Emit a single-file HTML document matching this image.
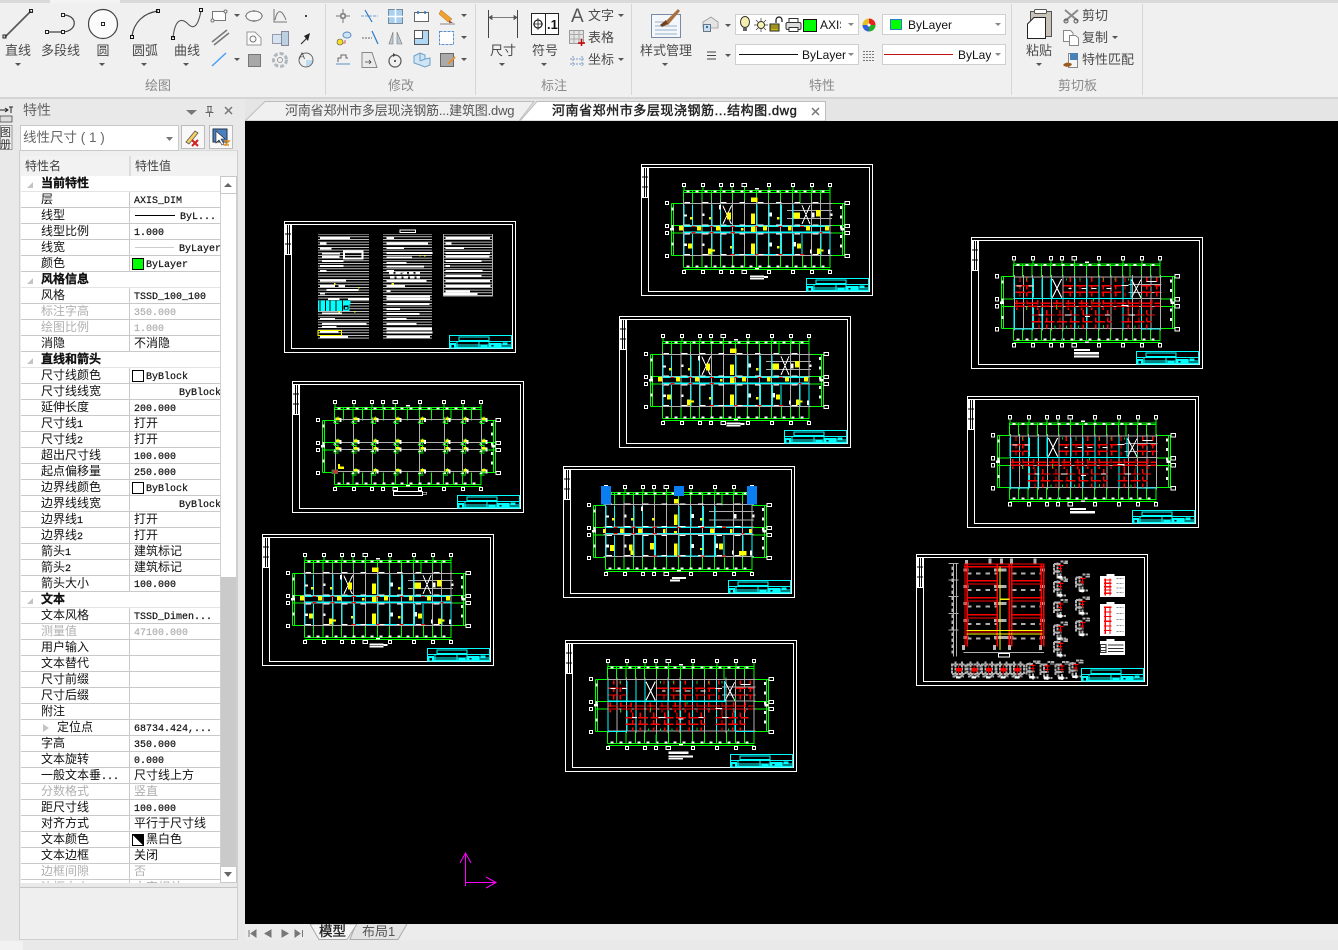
<!DOCTYPE html>
<html lang="zh"><head><meta charset="utf-8"><title>CAD</title>
<style>
html,body{margin:0;padding:0}
body{width:1338px;height:950px;overflow:hidden;background:#e9e9e9;position:relative;font-family:"Liberation Sans","Noto Sans CJK SC",sans-serif}
svg{position:absolute;display:block}
.a{position:absolute}
.r13{font:13px "Liberation Sans","Noto Sans CJK SC",sans-serif;fill:#4a4a4a}
.p13{font:13px "Liberation Sans","Noto Sans CJK SC",sans-serif;fill:#8a8a8a}
.en{font:12px "Liberation Sans",sans-serif;fill:#111}
#tbl{position:absolute;left:21px;top:176px;width:199px;height:707px;overflow:hidden;background:#fff;font:12px/15px "WenQuanYi Zen Hei","Noto Sans CJK SC",sans-serif;color:#111}
.w{height:16px;box-sizing:border-box;border-bottom:1px solid #c9c9c9;position:relative;white-space:nowrap}
.w>b,.w>u{position:absolute;top:-1px;text-decoration:none;font-weight:normal}
.w>b{left:20px}
.w>u{left:110px;width:89px;box-sizing:border-box;padding-left:3px;overflow:hidden;height:16px}
.w::after{content:"";position:absolute;left:108px;top:0;bottom:-1px;width:1px;background:#c9c9c9}
.g{border-bottom:1px solid #e4e4e4}
.g::after{display:none}
.g>b{font-weight:bold;-webkit-text-stroke:.3px #111}
.g::before{content:"";position:absolute;left:6px;top:6px;width:0;height:0;border-left:6px solid transparent;border-bottom:6px solid #c4c4c4}
.d>b,.d>u{color:#b0b0b0}
i{font:10px/15px "Liberation Mono",monospace;font-style:normal;-webkit-text-stroke:.2px currentColor}
.sw{position:absolute;left:1px;top:3px;width:10px;height:10px;border:1px solid #000;background:#fff}
.ln{display:inline-block;vertical-align:middle;height:1px;background:#000;margin:0 5px 0 1px}
</style></head><body>

<!-- ribbon -->
<div class="a" style="left:0;top:0;width:1338px;height:98px;background:#f0f0f0"></div>
<div class="a" style="left:0;top:0;width:1338px;height:3px;background:#d9d9d9"></div>
<div class="a" style="left:50px;top:0;width:70px;height:3px;background:#f3f3f3"></div>
<div class="a" style="left:0;top:97px;width:1338px;height:2px;background:#d4d4d4"></div>
<div class="a" style="left:0;top:99px;width:1338px;height:22px;background:#e5e5e5"></div>

<svg style="left:0;top:0" width="1338" height="98" viewBox="0 0 1338 98" fill="none">
<defs><clipPath id="c1"><rect x="819" y="14" width="22" height="20"/></clipPath><clipPath id="c2"><rect x="957" y="44" width="34" height="20"/></clipPath></defs>
<path d="M325.500 4V95M475.500 4V95M631.500 4V95M1011.500 4V95M1142.500 4V95" stroke="#d6d6d6"/>
<!-- big draw tools -->
<path d="M5 37L31 11" stroke="#555" stroke-width="1.600"/><rect x="3" y="35" width="3" height="3" stroke="#222"/><rect x="29.500" y="9.500" width="3" height="3" stroke="#222"/>
<path d="M47 32H63C78 31 78 15 63 15" stroke="#444" stroke-width="1.200"/><rect x="45.500" y="30.500" width="3" height="3" stroke="#222" fill="#fff"/><rect x="61.500" y="30.500" width="3" height="3" stroke="#222" fill="#fff"/><rect x="61.500" y="13.500" width="3" height="3" stroke="#222" fill="#fff"/>
<circle cx="103" cy="24" r="14.500" stroke="#444" stroke-width="1.200" fill="#fbfbfb"/><rect x="101.500" y="22.500" width="3" height="3" stroke="#222"/>
<path d="M132 36C134 22 144 13 158 11" stroke="#444" stroke-width="1.200"/><rect x="130.500" y="35.500" width="3" height="3" stroke="#111"/><rect x="156.500" y="9.500" width="3" height="3" stroke="#111"/>
<path d="M173 38C175 18 182 18 188 24C194 30 198 26 201 11" stroke="#555" stroke-width="1.100"/><rect x="171.500" y="36.500" width="3" height="3" stroke="#111"/><rect x="199.500" y="8.500" width="3" height="3" stroke="#111"/>
<g class="r13"><text class="r13" x="5" y="55">直线</text><text class="r13" x="41" y="55">多段线</text><text class="r13" x="96.500" y="55">圆</text><text class="r13" x="132" y="55">圆弧</text><text class="r13" x="174" y="55">曲线</text></g>
<!-- small dropdown arrows -->
<path d="M15 63h6l-3 3zM99 63h6l-3 3zM141 63h6l-3 3zM183 63h6l-3 3zM234 14h6l-3 3zM234 58h6l-3 3zM461 14h6l-3 3zM461 36h6l-3 3zM461 58h6l-3 3zM499 63h6l-3 3zM541 63h6l-3 3zM618 14h6l-3 3zM618 58h6l-3 3zM662 63h6l-3 3zM725 24h6l-3 3zM725 54h6l-3 3zM1036 63h6l-3 3zM1112 36h6l-3 3z" fill="#555"/>
<!-- small draw icons -->
<rect x="212.500" y="11.500" width="13" height="9" stroke="#777" fill="#fff"/><circle cx="212.500" cy="20.500" r="1.500" fill="#fff" stroke="#777"/><circle cx="225.500" cy="11.500" r="1.500" fill="#fff" stroke="#777"/>
<ellipse cx="254" cy="16" rx="8" ry="5" stroke="#777" fill="#f8f8f8"/><path d="M254 10v2M254 20v2M246 16h-1M262 16h1" stroke="#777"/>
<path d="M274 9V22H287M275 20C278 6 283 12 286 20" stroke="#777"/>
<rect x="305" y="15" width="2" height="2" fill="#444"/>
<path d="M212 42L227 30M214 45L229 33" stroke="#777" stroke-width="1.500"/>
<path d="M247 32H255L261 38V45H247Z" stroke="#999" fill="#fbfbfb"/><circle cx="253" cy="39" r="3" stroke="#777"/>
<rect x="272.500" y="34.500" width="13" height="9" fill="#d4e4f2" stroke="#99a"/><rect x="281.500" y="31.500" width="7" height="14" fill="#bcd0e2" stroke="#889"/>
<path d="M301 44L307 38" stroke="#333" stroke-width="1.200"/><path d="M304 36L310 33L308 41Z" fill="#222"/>
<path d="M212 66L226 53" stroke="#4aa0f0" stroke-width="1.500"/>
<rect x="248.500" y="54.500" width="12" height="12" fill="#a8a8a8" stroke="#777"/>
<circle cx="280" cy="60" r="6.500" stroke="#aeb8c0" stroke-width="3" stroke-dasharray="4 2"/><circle cx="280" cy="60" r="2.500" stroke="#999"/>
<path d="M306 60H313A7 7 0 0 1 306 67Z" fill="#bcdcf0"/><circle cx="306" cy="60" r="7" stroke="#666"/><text x="299" y="59" style="font:9px 'Liberation Sans',sans-serif;fill:#555">A</text>
<!-- modify -->
<path d="M336 16H350M343 9V23" stroke="#777"/><rect x="341" y="14" width="4" height="4" stroke="#555" fill="#f0f0f0"/>
<path d="M361 16H378" stroke="#7aa3c8" stroke-dasharray="3 1"/><path d="M365 10L372 22" stroke="#2a7ac8" stroke-width="1.200"/>
<rect x="388.500" y="9.500" width="14" height="14" fill="#a8d0f0" stroke="#789"/><path d="M395.500 9V23M388 16.500H403" stroke="#fff" stroke-width="1.500"/>
<rect x="414.500" y="12.500" width="14" height="9" fill="#fff" stroke="#666"/><path d="M418 11v3M425 11v3" stroke="#2a7ac8" stroke-width="1.500"/>
<path d="M441 10L452 19L448 22L439 14Z" fill="#f0a030" stroke="#a87020" stroke-width=".5"/><path d="M440 24H455" stroke="#888"/><path d="M449 20l4 3h-4z" fill="#a05030"/>
<circle cx="340" cy="42" r="3" fill="#f4e020" stroke="#555" stroke-width=".6"/><ellipse cx="347" cy="35" rx="4" ry="3" fill="#cfe2f4" stroke="#5a8ec0"/><path d="M345 40v3h-2" stroke="#c33" stroke-width=".8"/>
<path d="M362 38H372" stroke="#666" stroke-dasharray="2 1"/><path d="M372 31L378 44" stroke="#2a7ac8" stroke-width="1.200"/>
<path d="M393 32L389 44H393ZM397 32L402 44H397Z" fill="#bcc8d4" stroke="#777" stroke-width=".6"/>
<rect x="414.500" y="30.500" width="14" height="14" fill="#b0d8f4" stroke="#555"/><rect x="414.500" y="30.500" width="8" height="8" fill="#fff" stroke="#555"/>
<rect x="439.500" y="31.500" width="14" height="13" fill="#fff" stroke="#5a90c8" stroke-dasharray="3 1"/>
<path d="M336 64H350" stroke="#5a90c8"/><path d="M338 62V58H341V55H346V58H348" stroke="#666"/>
<path d="M362 52.500H372L377 67.500H362Z" fill="#eaeaea" stroke="#888"/><path d="M365 62H371M369 60l2 2l-2 2" stroke="#444" stroke-width=".8"/>
<circle cx="395" cy="61" r="6" stroke="#555" stroke-width="1.200"/><circle cx="395" cy="61" r="1" fill="#333"/><path d="M393 53l3 2l-3 2z" fill="#444"/>
<path d="M414 56l6-3l5 2v4l5-1v7l-5 2l-5-2l-6-2zM420 53v8M420 61l5-2" stroke="#6ea0c8" fill="#cfe4f4"/>
<rect x="440.500" y="53.500" width="13" height="13" fill="#aaa" stroke="#666"/><path d="M448 64l7-7" stroke="#e09030" stroke-width="2"/>
<!-- dim -->
<path d="M488.500 10V38M517.500 10V38" stroke="#444"/><path d="M489 17.500H517M489 17.500l3-2v4zM517 17.500l-3-2v4z" stroke="#555" stroke-width=".8" fill="#555"/>
<rect x="531.500" y="13.500" width="27" height="21" fill="#fff" stroke="#222"/><path d="M545.500 13V35" stroke="#222"/><circle cx="538" cy="24" r="4" stroke="#222" stroke-width="1.200"/><path d="M533 24H543M538 18V30" stroke="#222" stroke-width=".8"/><text x="547" y="29" style="font:bold 13px 'Liberation Sans',sans-serif;fill:#111">.1</text>
<text x="571" y="22" style="font:19px 'Liberation Sans',sans-serif;fill:#555">A</text>
<rect x="569.500" y="30.500" width="14" height="13" fill="#e4e4e4" stroke="#999"/><path d="M569 34.500H584M574 31V44M579 31V44M569 39H584" stroke="#aaa"/><path d="M578 43H585M581.500 39V46" stroke="#c00" stroke-width="1.500"/>
<path d="M573 56V66M582 56V66M570 59H585M570 64H585" stroke="#7a9cc0" stroke-dasharray="2 1"/>
<text class="r13" x="490" y="55">尺寸</text><text class="r13" x="532" y="55">符号</text>
<text class="r13" x="588" y="20">文字</text><text class="r13" x="588" y="42">表格</text><text class="r13" x="588" y="64">坐标</text>
<!-- style -->
<rect x="651.500" y="14.500" width="29" height="23" fill="#f3f6fa" stroke="#7a8aa4"/><path d="M655 22H664M655 26H677M655 30H677M655 34H677" stroke="#9ab0c8"/><path d="M664 23L678 9L680 11L668 25Z" fill="#a87040"/><path d="M660 25L666 20L668 24L662 27Z" fill="#704020"/>
<text class="r13" x="640" y="55">样式管理</text>
<!-- properties -->
<path d="M703 22L711 17L718 22V28H703Z" fill="#e4e4e4" stroke="#999" stroke-width=".8"/><rect x="703.500" y="24.500" width="7" height="7" fill="#cde" stroke="#678"/><path d="M706 27H708" stroke="#27a" stroke-width="2"/>
<path d="M707 52H716M707 55.500H716M707 59H716" stroke="#444"/>
<rect x="735.500" y="14.500" width="123" height="20" fill="#fff" stroke="#cfcfcf"/>
<ellipse cx="745" cy="22" rx="4.500" ry="5.500" fill="#f5eeb0" stroke="#333"/><path d="M743 28h4v3h-4z" fill="#666"/>
<circle cx="761" cy="25" r="3.500" fill="#f8f4b0" stroke="#333"/><path d="M761 18v3M761 29v3M754 25h3M765 25h3M756 20l2 2M764 28l2 2M766 20l-2 2M756 30l2-2" stroke="#333" stroke-width=".7"/>
<rect x="770" y="24" width="9" height="7" fill="#c8b820" stroke="#222"/><path d="M770 26h9M770 28h9" stroke="#222" stroke-width=".6"/><path d="M776 23v-3a3 3 0 0 1 6 0v2" stroke="#111" stroke-width="1.200"/>
<rect x="786" y="22.500" width="15" height="7" rx="1.500" fill="#ddd" stroke="#333"/><rect x="789" y="18.500" width="9" height="4" fill="#fff" stroke="#333"/><rect x="789" y="27.500" width="9" height="4" fill="#fff" stroke="#333"/>
<rect x="803.500" y="19.500" width="13" height="12" fill="#0f0" stroke="#111"/>
<text class="en" x="820" y="29" clip-path="url(#c1)">AXIS</text>
<circle cx="869" cy="25" r="6.500" fill="#e8c020"/><path d="M869 25V18.500A6.500 6.500 0 0 1 875.500 25Z" fill="#e82020"/><path d="M869 25H875.500A6.500 6.500 0 0 1 869 31.500Z" fill="#20b020"/><path d="M869 25V31.500A6.500 6.500 0 0 1 862.500 25Z" fill="#3060e0"/><circle cx="869" cy="25" r="1.500" fill="#fff"/>
<rect x="882.500" y="14.500" width="123" height="20" fill="#fff" stroke="#cfcfcf"/>
<rect x="890.500" y="19.500" width="11" height="10" fill="#0f0" stroke="#2a7ac8"/>
<text class="en" x="908" y="29">ByLayer</text>
<rect x="735.500" y="44.500" width="123" height="20" fill="#fff" stroke="#cfcfcf"/><path d="M739 54.500H798" stroke="#111"/><text class="en" x="802" y="59">ByLayer</text>
<path d="M863 51.500H875M863 54.500H875M863 57.500H875M863 60.500H875" stroke="#777" stroke-dasharray="2 1"/>
<rect x="882.500" y="44.500" width="123" height="20" fill="#fff" stroke="#cfcfcf"/><path d="M884 54.500H953" stroke="#c41010"/><text class="en" x="958" y="59" clip-path="url(#c2)">ByLayer</text>
<path d="M848 23h6l-3 3zM848 53h6l-3 3zM995 23h6l-3 3zM995 53h6l-3 3z" fill="#888"/>
<!-- clipboard -->
<rect x="1030.500" y="11.500" width="21" height="25" fill="#c9c2b8" stroke="#555"/><rect x="1034.500" y="9.500" width="12" height="4" rx="1" fill="#fff" stroke="#555"/>
<path d="M1027.500 24L1034 17.500H1045.500V38.500H1027.500Z" fill="#fff" stroke="#222"/>
<text class="r13" x="1026" y="55">粘贴</text>
<path d="M1065 10L1078 21M1078 10L1065 21" stroke="#8a8a8a" stroke-width="2"/><circle cx="1066" cy="21" r="2" stroke="#555"/><circle cx="1076" cy="21" r="2" stroke="#555"/>
<text class="r13" x="1082" y="20">剪切</text>
<path d="M1063.500 30.500H1070.500L1073 33V41.500H1063.500Z" fill="#fff" stroke="#888"/><path d="M1069.500 35.500H1075.500L1078.500 38V45.500H1069.500Z" fill="#fff" stroke="#888"/>
<text class="r13" x="1082" y="42">复制</text>
<rect x="1068.500" y="53.500" width="9" height="14" fill="#f4f4f4" stroke="#888"/><rect x="1070" y="53" width="8" height="7" fill="#4a80b8"/><path d="M1063 65c2-3 6-3 9-1c-1 3-6 4-9 1z" fill="#9a5a20"/>
<text class="r13" x="1082" y="64">特性匹配</text>
<!-- panel labels -->
<text class="p13" x="145" y="90">绘图</text><text class="p13" x="388" y="90">修改</text><text class="p13" x="541" y="90">标注</text><text class="p13" x="809" y="90">特性</text><text class="p13" x="1058" y="90">剪切板</text>
</svg>

<!-- tab bar -->
<svg style="left:245px;top:99px" width="1093" height="22" viewBox="245 99 1093 22" fill="none">
<path d="M245 121L265 101.500H534L519 121Z" fill="#f0f0f0" stroke="#bdbdbd"/>
<path d="M520 121L537 101.500H825.500V121Z" fill="#fff" stroke="#bdbdbd"/>
<text x="285" y="115" style="font:13px 'Liberation Sans','Noto Sans CJK SC',sans-serif;fill:#555;letter-spacing:-.18px">河南省郑州市多层现浇钢筋...建筑图.dwg</text>
<text x="552" y="115" style="font:13px 'Liberation Sans','Noto Sans CJK SC',sans-serif;fill:#222;stroke:#222;stroke-width:.4;letter-spacing:.55px">河南省郑州市多层现浇钢筋...结构图.dwg</text>
<path d="M812 108L819 115M819 108L812 115" stroke="#777" stroke-width="1.500"/>
</svg>

<!-- left panel -->
<div class="a" style="left:0;top:99px;width:245px;height:841px;background:#e9e9e9"></div>
<div class="a" style="left:19px;top:150px;width:219px;height:790px;box-sizing:border-box;border:1px solid #cfcfcf;border-top:1px solid #d8d8d8;background:#efefef"></div>
<div class="a" style="left:21px;top:156px;width:199px;height:20px;background:#f2f2f2;font:12px/20px 'WenQuanYi Zen Hei','Noto Sans CJK SC',sans-serif;color:#444">
 <span class="a" style="left:4px">特性名</span><span class="a" style="left:114px">特性值</span>
 <span class="a" style="left:108px;top:0;width:2px;height:20px;background:#dcdcdc"></span></div>
<div class="a" style="left:220px;top:156px;width:17px;height:20px;background:#f2f2f2"></div>

<svg style="left:0;top:99px" width="245" height="58" viewBox="0 99 245 58" fill="none">
<text x="23" y="115" style="font:14px 'Liberation Sans','Noto Sans CJK SC',sans-serif;fill:#666">特性</text>
<path d="M186 110h11l-5.500 5z" fill="#777"/>
<path d="M207 106.500h5M208 107v5h3v-5M205.500 112.500h8M209.500 113v4" stroke="#666"/>
<path d="M225 107L232 114M232 107L225 114" stroke="#777" stroke-width="1.500"/>
<rect x="0" y="116" width="12" height="6" fill="#ddd" stroke="#333" stroke-width=".7"/><path d="M0 110H8M5 108l3 2l-3 2" stroke="#222"/><path d="M9 107h4M11 107v6" stroke="#222"/>
<rect x="0.500" y="125.500" width="11.500" height="24" fill="#f0f0f0" stroke="#999"/>
<text x="0" y="136" style="font:11px 'WenQuanYi Zen Hei','Noto Sans CJK SC',sans-serif;fill:#333">图</text>
<text x="0" y="148" style="font:11px 'WenQuanYi Zen Hei','Noto Sans CJK SC',sans-serif;fill:#333">册</text>
<rect x="20.500" y="125.500" width="158" height="25" fill="#fff" stroke="#c8c8c8"/>
<text x="23" y="142" style="font:13.500px 'Liberation Sans','Noto Sans CJK SC',sans-serif;fill:#666">线性尺寸 ( 1 )</text>
<path d="M166 137h7l-3.500 4z" fill="#777"/>
<rect x="181.500" y="125.500" width="23" height="23" fill="#f8f8f8" stroke="#bbb"/>
<path d="M186 142l9-11l3 2l-9 11z" fill="#f4d060" stroke="#555" stroke-width=".8"/><path d="M192 140l6 6M198 140l-6 6" stroke="#d02020" stroke-width="2"/>
<rect x="209.500" y="125.500" width="23" height="23" fill="#f8f8f8" stroke="#bbb"/>
<rect x="213" y="129" width="14" height="13" fill="#4a80c0" stroke="#234"/><path d="M216 131l0 12l3-3l3 5l2-1l-3-5l4 0z" fill="#fff" stroke="#222" stroke-width=".6"/><path d="M224 141l5 0l-4 4l4 0" stroke="#e09020" stroke-width="1.500"/>
</svg>

<!-- table -->
<div id="tbl">
<div class="w g"><b>当前特性</b></div>
<div class="w"><b>层</b><u><i>AXIS_DIM</i></u></div>
<div class="w"><b>线型</b><u><span class="ln" style="width:40px"></span><i>ByL...</i></u></div>
<div class="w"><b>线型比例</b><u><i>1.000</i></u></div>
<div class="w"><b>线宽</b><u><span class="ln" style="width:39px;background:#ccc"></span><i>ByLayer</i></u></div>
<div class="w"><b>颜色</b><u><span class="sw" style="background:#0f0"></span><i style="margin-left:12px">ByLayer</i></u></div>
<div class="w g"><b>风格信息</b></div>
<div class="w"><b>风格</b><u><i>TSSD_100_100</i></u></div>
<div class="w d"><b>标注字高</b><u><i>350.000</i></u></div>
<div class="w d"><b>绘图比例</b><u><i>1.000</i></u></div>
<div class="w"><b>消隐</b><u>不消隐</u></div>
<div class="w g"><b>直线和箭头</b></div>
<div class="w"><b>尺寸线颜色</b><u><span class="sw"></span><i style="margin-left:12px">ByBlock</i></u></div>
<div class="w"><b>尺寸线线宽</b><u><i style="margin-left:45px">ByBlock</i></u></div>
<div class="w"><b>延伸长度</b><u><i>200.000</i></u></div>
<div class="w"><b>尺寸线<i>1</i></b><u>打开</u></div>
<div class="w"><b>尺寸线<i>2</i></b><u>打开</u></div>
<div class="w"><b>超出尺寸线</b><u><i>100.000</i></u></div>
<div class="w"><b>起点偏移量</b><u><i>250.000</i></u></div>
<div class="w"><b>边界线颜色</b><u><span class="sw"></span><i style="margin-left:12px">ByBlock</i></u></div>
<div class="w"><b>边界线线宽</b><u><i style="margin-left:45px">ByBlock</i></u></div>
<div class="w"><b>边界线<i>1</i></b><u>打开</u></div>
<div class="w"><b>边界线<i>2</i></b><u>打开</u></div>
<div class="w"><b>箭头<i>1</i></b><u>建筑标记</u></div>
<div class="w"><b>箭头<i>2</i></b><u>建筑标记</u></div>
<div class="w"><b>箭头大小</b><u><i>100.000</i></u></div>
<div class="w g"><b>文本</b></div>
<div class="w"><b>文本风格</b><u><i>TSSD_Dimen...</i></u></div>
<div class="w d"><b>测量值</b><u><i>47100.000</i></u></div>
<div class="w"><b>用户输入</b><u></u></div>
<div class="w"><b>文本替代</b><u></u></div>
<div class="w"><b>尺寸前缀</b><u></u></div>
<div class="w"><b>尺寸后缀</b><u></u></div>
<div class="w"><b>附注</b><u></u></div>
<div class="w"><b style="left:36px">定位点</b><span style="position:absolute;left:22px;top:4px;width:0;height:0;border-left:6px solid #c4c4c4;border-top:4px solid transparent;border-bottom:4px solid transparent"></span><u><i>68734.424,...</i></u></div>
<div class="w"><b>字高</b><u><i>350.000</i></u></div>
<div class="w"><b>文本旋转</b><u><i>0.000</i></u></div>
<div class="w"><b>一般文本垂<i>...</i></b><u>尺寸线上方</u></div>
<div class="w d"><b>分数格式</b><u>竖直</u></div>
<div class="w"><b>距尺寸线</b><u><i>100.000</i></u></div>
<div class="w"><b>对齐方式</b><u>平行于尺寸线</u></div>
<div class="w"><b>文本颜色</b><u><span class="sw" style="background:linear-gradient(45deg,#fff 50%,#000 50%)"></span><span style="margin-left:12px">黑白色</span></u></div>
<div class="w"><b>文本边框</b><u>关闭</u></div>
<div class="w d"><b>边框间隙</b><u>否</u></div>
<div class="w d"><b>边框大小</b><u>文字相关</u></div>
</div>

<!-- scrollbar -->
<div class="a" style="left:220px;top:176px;width:17px;height:707px;background:#fff"></div>
<div class="a" style="left:220px;top:577px;width:17px;height:289px;background:#cacaca"></div>
<svg style="left:220px;top:176px" width="17" height="707" viewBox="0 0 17 707" fill="none">
<rect x=".5" y=".5" width="16" height="17" fill="#fff" stroke="#c8c8c8"/><path d="M4 11h8l-4-4z" fill="#666"/>
<rect x=".5" y="690.500" width="16" height="16" fill="#fff" stroke="#c8c8c8"/><path d="M4 696h8l-4 5z" fill="#666"/>
<path d="M.5 18V690M16.500 18V690" stroke="#d0d0d0"/>
</svg>
<div class="a" style="left:20px;top:883px;width:217px;height:4px;background:#e9e9e9"></div>
<div class="a" style="left:20px;top:887px;width:217px;height:1px;background:#c4c4c4"></div>

<!-- canvas -->
<svg style="left:245px;top:121px;background:#000;shape-rendering:crispEdges" width="1093" height="803" viewBox="245 121 1093 803" fill="none">
<defs>
<g id="tb">
 <rect x="1.500" y="1.500" width="186" height="38" stroke="#0ff" stroke-width="3"/>
 <rect x="30" y="6" width="90" height="11" stroke="#0ff" stroke-width="3"/>
 <path d="M0 20H188M0 30H188M0 36H188" stroke="#0ff" stroke-width="3"/>
 <path d="M24 20V40M90 20V40M120 20V40" stroke="#0ff" stroke-width="3"/>
 <rect x="3" y="24" width="18" height="15" fill="#0ff"/><rect x="122" y="24" width="36" height="15" fill="#0ff"/><rect x="160" y="22" width="16" height="6" fill="#0ff"/>
 <rect x="8" y="30" width="7" height="7" fill="#000"/><rect x="94" y="31" width="22" height="4" fill="#0ff"/><rect x="128" y="30" width="6" height="5" fill="#000"/>
</g>
<g id="fr">
 <rect x=".5" y=".5" width="231" height="131" stroke="#fff"/>
 <rect x="7.500" y="3.500" width="221" height="124" stroke="#fff"/>
 <rect x="1.500" y="3.500" width="6" height="30" stroke="#fff" fill="#000"/>
 <path d="M1 4H7V33H1Z" fill="#fff"/><path d="M3.500 4V33M5.500 4V33" stroke="#000" stroke-width=".8"/><path d="M1 13H7M1 23H7" stroke="#000" stroke-width=".8"/>
 <use href="#tb" transform="translate(165 114) scale(.3333)"/>
</g>
<rect id="bb" width="10" height="10" stroke="#fff" stroke-width="3"/>
<rect id="bw" width="14" height="10" stroke="#fff" stroke-width="3"/>
<g id="fw">
 <path d="M130 92H572M130 97H572M130 322H572M130 328H572M94 130V286M100 130V286M607 130V286M613 130V286M94 130H130M94 197H130M94 219H130M94 286H130M572 130H613M572 197H613M572 219H613M572 286H613" stroke="#0f0" stroke-width="3"/>
 <path d="M130 92V130M158 92V130M186 92V130M214 92V130M241 92V130M277 92V130M313 92V130M349 92V130M385 92V130M421 92V130M457 92V130M480 92V130M514 92V130M541 92V130M570 92V130M130 286V322M158 286V322M186 286V322M214 286V322M241 286V322M277 286V322M313 286V322M349 286V322M385 286V322M421 286V322M457 286V322M487 286V322M514 286V322M541 286V322M570 286V322M132 81V92M189 81V92M243 81V92M276 81V92M313 81V92M387 81V92M459 81V92M516 81V92M570 81V92M132 328V331M189 328V331M243 328V331M276 328V331M313 328V331M387 328V331M459 328V331M516 328V331M570 328V331" stroke="#0f0" stroke-width="3"/>
 <path d="M140 95H566" stroke="#fff" stroke-width="6" stroke-dasharray="9 18"/><path d="M140 319H566" stroke="#fff" stroke-width="6" stroke-dasharray="9 18"/>
 <path d="M97 142V280" stroke="#fff" stroke-width="6" stroke-dasharray="9 44"/><path d="M603 138V270" stroke="#fff" stroke-width="6" stroke-dasharray="9 20"/>
 <rect x="345" y="84" width="12" height="5" fill="#fff"/><rect x="345" y="324" width="12" height="5" fill="#fff"/><rect x="90" y="204" width="12" height="8" fill="#fff"/><rect x="601" y="204" width="12" height="8" fill="#fff"/>
 <use href="#bb" x="127" y="70"/><use href="#bb" x="184" y="70"/><use href="#bb" x="238" y="70"/><use href="#bb" x="271" y="70"/><use href="#bw" x="306" y="70"/><use href="#bb" x="382" y="70"/><use href="#bb" x="454" y="70"/><use href="#bb" x="511" y="70"/><use href="#bb" x="565" y="70"/>
 <use href="#bb" x="127" y="331"/><use href="#bb" x="184" y="331"/><use href="#bb" x="238" y="331"/><use href="#bb" x="271" y="331"/><use href="#bw" x="306" y="331"/><use href="#bb" x="382" y="331"/><use href="#bb" x="454" y="331"/><use href="#bb" x="511" y="331"/><use href="#bb" x="565" y="331"/>
 <use href="#bb" x="76" y="124"/><use href="#bb" x="76" y="193"/><use href="#bb" x="76" y="214"/><use href="#bb" x="76" y="283"/>
 <use href="#bw" x="615" y="124"/><use href="#bw" x="615" y="193"/><use href="#bw" x="615" y="214"/><use href="#bw" x="615" y="283"/>
</g>
<g id="st">
 <path d="M124 130H576M124 197H576M124 219H576M124 286H576M441 151H576M441 176H576M130 122V290M186 122V290M214 122V290M241 122V290M277 122V290M313 122V290M349 122V290M385 122V290M421 122V290M457 122V290M514 122V290M541 122V290M570 122V290" stroke="#b0b0b0" stroke-width="3"/>
 <path d="M132 134V195M158 134V195M216 134V195M242 134V195M351 134V195M387 134V195M424 134V195M459 134V195M132 222V285M158 222V285M216 222V285M243 222V285M280 222V285M351 222V285M387 222V285M424 222V285M460 222V285M486 222V285M543 222V285M570 222V285" stroke="#0ff" stroke-width="3.500"/>
 <path d="M132 199H570M132 217H570M280 284H460" stroke="#0ff" stroke-width="3.500"/>
 <path d="M133 128H570M133 195H570M133 222H570M133 283H570" stroke="#fff" stroke-width="3" stroke-dasharray="17 38"/>
 <path d="M155 199H166M155 217H166M209 199H220M209 217H220M272 199H285M272 217H285M272 284H285M345 199H355M345 284H355M416 199H428M416 284H428M480 199H492M480 284H492M538 217H548" stroke="#f00" stroke-width="3"/>
 <path d="M132 163h9v6h-9zM188 160h6v8h-6zM237 135h6v14h-6zM388 158h8v12h-8zM516 158h8v14h-8zM572 160h6v8h-6zM132 250h9v8h-9zM188 250h6v8h-6zM388 248h8v12h-8zM460 246h8v14h-8zM564 268h6v14h-6zM510 268h5v12h-5z" fill="#fff"/>
</g>
<g id="xx"><path d="M248 136L274 192M275 136L249 192M486 136L510 192M510 136L486 192" stroke="#fff" stroke-width="3"/></g>
<g id="yl" fill="#ff0">
 <rect x="333" y="112" width="20" height="14"/><rect x="261" y="157" width="12" height="22"/><rect x="333" y="160" width="12" height="32"/><rect x="150" y="171" width="8" height="8"/><rect x="207" y="171" width="6" height="8"/><rect x="411" y="171" width="8" height="8"/><rect x="460" y="158" width="20" height="18"/><rect x="528" y="150" width="14" height="20"/><rect x="117" y="198" width="12" height="14"/><rect x="171" y="198" width="12" height="14"/><rect x="228" y="198" width="12" height="14"/><rect x="303" y="204" width="8" height="8"/><rect x="333" y="200" width="14" height="16"/><rect x="369" y="198" width="12" height="14"/><rect x="444" y="198" width="10" height="14"/><rect x="498" y="198" width="12" height="14"/><rect x="555" y="198" width="12" height="14"/><rect x="144" y="250" width="12" height="16"/><rect x="204" y="266" width="10" height="18"/><rect x="215" y="268" width="10" height="6"/><rect x="270" y="258" width="6" height="8"/><rect x="333" y="250" width="12" height="32"/><rect x="411" y="258" width="8" height="8"/><rect x="471" y="250" width="12" height="16"/><rect x="531" y="266" width="10" height="16"/><rect x="543" y="268" width="8" height="6"/>
</g>
<g id="sm"><path d="M330 347H372V351H330ZM330 352H372V358H330Z" fill="#fff"/><rect x="372" y="348" width="12" height="6" fill="#fff"/></g>
<g id="rd">
 <path d="M146 126H590M146 190H590M146 214H590M146 280H590M490 148H590M490 172H590M148 120V286M175 120V286M203 120V286M232 120V286M259 120V286M294 120V286M328 120V286M364 120V286M402 120V286M438 120V286M474 120V286M502 120V286M530 120V286M558 120V286M586 120V286" stroke="#b0b0b0" stroke-width="3"/>
 <path d="M148 130V188M205 130V188M232 130V188M259 130V188M330 130V188M366 130V188M402 130V188M474 130V188M498 130V188M148 218V280M205 218V280M232 218V280M330 218V280M366 218V280M402 218V280M474 218V280M530 218V280M148 282H205M530 282H586M148 191H500" stroke="#0ff" stroke-width="3.500"/>
 <path d="M150 152H203M295 152H470M530 152H585M150 172H203M295 172H470M530 172H585M150 205H585M150 214H585M200 240H440M470 240H570M200 260H440M470 260H560" stroke="#f00" stroke-width="4" stroke-dasharray="30 8"/>
 <path d="M165 128V190M185 128V190M316 128V190M345 128V190M380 128V190M415 128V190M452 128V190M480 128V190M545 128V190M575 128V190M155 195V225M186 195V225M218 195V225M275 195V225M310 195V225M350 195V225M380 195V225M415 195V225M450 195V225M490 195V225M525 195V225M560 195V225M222 225V280M245 225V280M285 225V280M318 225V280M355 225V280M392 225V280M428 225V280M490 225V280M522 225V280M545 225V280" stroke="#f00" stroke-width="4" stroke-dasharray="13 9"/>
 <path d="M155 153H170M190 153H205M310 160H320M350 160H365M380 160H395M425 160H440M470 152H490M545 140H575M470 212H490M220 240H235M300 240H320M360 244H375M420 240H435M490 240H510" stroke="#fff" stroke-width="3"/>
 <path d="M185 130V137M305 130V137M345 130V137M415 130V137M450 130V137M490 130V137M530 180V190M185 215V225M275 210V222M385 190V200M270 272V282M305 272V282M340 272V282M415 270V280M510 272V282M292 290V320" stroke="#0c3" stroke-width="3"/>
 <path d="M262 132L290 188M290 132L262 188M500 134L528 188M528 134L500 188" stroke="#fff" stroke-width="3"/>
</g>
<g id="nd">
 <path d="M-8 8L8 -6M-6 11h14M6 -10V8" stroke="#0f0" stroke-width="3"/>
 <rect x="0" y="-7" width="11" height="7" fill="#ff0"/><rect x="10" y="-6" width="6" height="12" fill="#fff"/><rect x="-6" y="4" width="8" height="4" fill="#fff"/>
</g>
<pattern id="tl" width="8" height="8" patternUnits="userSpaceOnUse"><rect width="8" height="3" fill="#d4d4d4"/></pattern>
<g id="d1">
 <path d="M4 14V46M14 10V54M24 6H44M4 14H24M4 36H28M24 42V60M12 54H40" stroke="#b0b0b0" stroke-width="6" stroke-dasharray="9 2"/>
 <path d="M24 14V36M16 18H32M16 28H28" stroke="#f00" stroke-width="3"/>
 <rect x="14" y="50" width="14" height="8" fill="#fff"/><path d="M38 6H46M32 12H46" stroke="#b0b0b0" stroke-width="4"/>
</g>
<g id="d2">
 <path d="M0 14H40V42H0ZM10 4V50M30 4V50M2 50H36" stroke="#b0b0b0" stroke-width="6" stroke-dasharray="8 2"/>
 <path d="M12 24H30V34H12Z" fill="#f00"/><path d="M20 16V42" stroke="#f00" stroke-width="3"/><rect x="12" y="50" width="14" height="5" fill="#fff"/>
</g>
</defs>

<!-- frames -->
<use href="#fr" x="284" y="221"/><use href="#fr" x="641" y="164"/><use href="#fr" x="971" y="237"/><use href="#fr" x="619" y="316"/><use href="#fr" x="292" y="381"/><use href="#fr" x="967" y="396"/><use href="#fr" x="563" y="466"/><use href="#fr" x="262" y="534"/><use href="#fr" x="916" y="554"/><use href="#fr" x="565" y="640"/>

<!-- B -->
<g transform="translate(640 160) scale(.3333)"><use href="#fw"/><use href="#st"/><use href="#xx"/><use href="#yl"/><use href="#sm"/></g>
<!-- D -->
<g transform="translate(619 311) scale(.3333)"><use href="#fw"/><use href="#st"/><use href="#xx"/><use href="#yl"/><use href="#sm" transform="translate(-7 -12)"/></g>
<!-- H -->
<g transform="translate(261 530) scale(.3333)"><use href="#fw"/><use href="#st"/><use href="#xx"/><use href="#yl"/><use href="#sm" transform="translate(-5 -6)"/></g>
<!-- C -->
<g transform="translate(965 235) scale(.3333)"><use href="#fw" transform="translate(15 -5)"/><use href="#rd"/><path d="M327 342h48v6h-48zM327 351h75v7h-75zM327 361h75v7h-75z" fill="#fff"/></g>
<!-- F -->
<g transform="translate(961 394) scale(.3333)"><use href="#fw" transform="translate(15 -5)"/><use href="#rd"/><path d="M327 342h48v6h-48zM327 351h75v7h-75z" fill="#fff"/></g>
<!-- J -->
<g transform="translate(560 636) scale(.3333)"><use href="#fw" transform="translate(12 0)"/><g transform="translate(-4 5)"><use href="#rd"/></g><path d="M325 347h60v7h-60zM325 358h74v6h-74zM325 366h44v4h-44z" fill="#fff"/></g>
<!-- G -->
<g transform="translate(560 465) scale(.3333)"><use href="#fw" transform="translate(6 -9)"/><g transform="translate(6 -11)"><use href="#st"/></g>
 <g fill="#ff0"><rect x="342" y="102" width="14" height="14"/><rect x="342" y="148" width="10" height="32"/><rect x="156" y="159" width="7" height="8"/><rect x="213" y="159" width="7" height="8"/><rect x="276" y="159" width="7" height="8"/><rect x="420" y="159" width="8" height="8"/><rect x="129" y="192" width="7" height="12"/><rect x="180" y="190" width="10" height="14"/><rect x="234" y="190" width="12" height="14"/><rect x="309" y="192" width="8" height="12"/><rect x="342" y="198" width="9" height="8"/><rect x="450" y="190" width="12" height="14"/><rect x="510" y="192" width="8" height="12"/><rect x="567" y="192" width="8" height="12"/><rect x="150" y="240" width="12" height="18"/><rect x="207" y="238" width="10" height="18"/><rect x="211" y="256" width="10" height="14"/><rect x="270" y="234" width="12" height="20"/><rect x="342" y="236" width="10" height="36"/><rect x="420" y="249" width="8" height="6"/><rect x="477" y="236" width="12" height="18"/><rect x="537" y="258" width="22" height="14"/></g>
 <g fill="#0a7df0"><rect x="123" y="63" width="30" height="56"/><rect x="342" y="63" width="30" height="30"/><rect x="561" y="63" width="30" height="56"/></g>
 <path d="M336 336h42v6h-42zM330 344h30v6h-30z" fill="#fff"/>
</g>
<!-- E -->
<g transform="translate(290 378) scale(.3333)"><use href="#fw" transform="translate(3 -3)"/>
 <path d="M132 124H580M132 193H580M132 214H580M132 280H580M136 118V286M190 118V286M247 118V286M316 118V286M388 118V286M463 118V286M517 118V286M574 118V286" stroke="#b0b0b0" stroke-width="3"/>
 <use href="#nd" x="138" y="126"/><use href="#nd" x="192" y="126"/><use href="#nd" x="250" y="126"/><use href="#nd" x="318" y="126"/><use href="#nd" x="392" y="126"/><use href="#nd" x="466" y="126"/><use href="#nd" x="520" y="126"/><use href="#nd" x="576" y="126"/>
 <use href="#nd" x="138" y="192"/><use href="#nd" x="192" y="192"/><use href="#nd" x="250" y="192"/><use href="#nd" x="318" y="192"/><use href="#nd" x="392" y="192"/><use href="#nd" x="466" y="192"/><use href="#nd" x="520" y="192"/><use href="#nd" x="576" y="192"/>
 <use href="#nd" x="138" y="214"/><use href="#nd" x="192" y="214"/><use href="#nd" x="250" y="214"/><use href="#nd" x="318" y="214"/><use href="#nd" x="392" y="214"/><use href="#nd" x="466" y="214"/><use href="#nd" x="520" y="214"/><use href="#nd" x="576" y="214"/>
 <use href="#nd" x="192" y="280"/><use href="#nd" x="250" y="280"/><use href="#nd" x="318" y="280"/><use href="#nd" x="392" y="280"/><use href="#nd" x="466" y="280"/><use href="#nd" x="520" y="280"/><use href="#nd" x="576" y="280"/>
 <path d="M144 258h6v8h12v7h-18z" fill="#ff0"/><path d="M124 274h20v14h-20z" fill="#3a7a3a"/><path d="M130 276h12v10h-12z" fill="#c33"/>
 <path d="M280 92V114" stroke="#0f0" stroke-width="3"/>
 <rect x="310" y="340" width="88" height="12" stroke="#fff" stroke-width="3"/><rect x="398" y="343" width="12" height="6" stroke="#fff" stroke-width="2"/>
</g>
<!-- A text sheet -->
<g transform="translate(280 215) scale(.3333)">
 <rect x="114" y="57" width="153" height="316" fill="url(#tl)"/><rect x="309" y="57" width="147" height="316" fill="url(#tl)"/><rect x="490" y="57" width="148" height="186" fill="url(#tl)"/>
 <path d="M490 57V243H638V57" stroke="#b0b0b0" stroke-width="3"/>
 <path d="M120 69H210M120 85H140M120 100H155M126 116H180M126 126H178M126 138H190M120 153H190M120 168H140M120 197H198M120 213H165M175 213H195M140 225H235M120 236H135M144 252H178M204 252H267M126 296H186M120 312H165M126 327H260M126 336H170M120 350H176M120 366H204M192 110H248V130H192Z" stroke="#fff" stroke-width="6"/>
 <path d="M320 69H342M320 85H444M320 99H372M320 114H458M320 128H396M320 144H380M320 154H432M320 168H342M320 198H440M320 213H375M320 228H332M320 244H450M320 252H450M320 267H448M320 282H360M320 297H418M320 312H380M320 327H410M320 342H456M320 352H458M320 366H450" stroke="#fff" stroke-width="6"/>
 <path d="M497 69H630M497 85H515M497 99H552M497 114H630M497 124H628M497 138H605M497 153H510M497 168H608M497 183H605M497 198H630M497 213H632M497 229H570M490 237H592" stroke="#fff" stroke-width="6"/>
 <rect x="360" y="45" width="47" height="7" stroke="#fff" stroke-width="3"/>
 <path d="M327 175H420M330 187H420" stroke="#fff" stroke-width="7" stroke-dasharray="14 6"/><rect x="362" y="168" width="10" height="6" fill="#bbb"/>
 <rect x="114" y="256" width="98" height="12" fill="#0ff"/><rect x="114" y="268" width="95" height="20" fill="#0ff"/><path d="M120 256V288M136 256V288M150 256V288M168 256V288M188 256V288" stroke="#000" stroke-width="3"/><rect x="190" y="272" width="16" height="12" fill="#000"/><rect x="195" y="276" width="7" height="6" fill="#0ff"/>
 <path d="M114 350V361H185V346H114Z" stroke="#ff0" stroke-width="3"/><path d="M130 361H180" stroke="#ff0" stroke-width="3" stroke-dasharray="10 6"/>
 <path d="M162 204h4v4h-4zM234 216h4v4h-4zM176 288h4v4h-4zM222 288h4v4h-4zM418 120h4v4h-4zM432 120h4v4h-4zM334 204h4v4h-4zM338 204h4v4h-4z" fill="#ff0"/>
</g>
<!-- I detail sheet -->
<g transform="translate(910 550) scale(.3333)">
 <path d="M130 40V320M140 40V320M116 40H146M116 90H146M116 140H146M116 190H146M116 240H146" stroke="#b0b0b0" stroke-width="3"/>
 <path d="M128 50V310" stroke="#bbb" stroke-width="6" stroke-dasharray="10 8"/>
 <path d="M170 70H260M305 70H392M170 120H260M305 120H392M170 170H260M305 170H392M170 222H260M305 222H392M170 265H260M305 265H392" stroke="#b0b0b0" stroke-width="6" stroke-dasharray="14 14"/>
 <path d="M160 60H175M160 110H175M160 160H175M160 212H175M160 262H175M252 60H290M252 110H290M252 160H290M252 212H290M252 262H310M390 60H405M390 110H405M390 160H405M390 212H405M390 262H405M170 30V40M240 25V40M275 25V40M305 25V40M375 25V40" stroke="#b0b0b0" stroke-width="9"/>
 <path d="M165 40V290M172 40V290M262 40V290M298 40V290M305 40V290M394 40V290M401 40V290M162 42H402M162 50H402M170 92H262M305 92H398M170 102H262M305 102H398M170 143H262M305 143H398M170 153H262M305 153H398M170 194H262M305 194H398M170 204H262M305 204H398" stroke="#f00" stroke-width="4"/>
 <path d="M270 50V300M170 242H398M170 252H398M270 148H298" stroke="#ff0" stroke-width="3.500"/>
 <path d="M170 246H262M305 246H398" stroke="#f00" stroke-width="3"/>
 <path d="M160 307H402" stroke="#b0b0b0" stroke-width="3"/><path d="M254 285V300M298 285V300M392 285V300M160 285V300" stroke="#bbb" stroke-width="9"/>
 <rect x="265" y="311" width="34" height="10" stroke="#fff" stroke-width="3"/>
 <use href="#d1" x="428" y="28"/><use href="#d1" x="428" y="82"/><use href="#d1" x="428" y="144"/><use href="#d1" x="428" y="212"/><use href="#d1" x="428" y="262"/><use href="#d1" x="494" y="68"/><use href="#d1" x="494" y="136"/><use href="#d1" x="494" y="200"/>
 <use href="#d2" x="126" y="330"/><use href="#d2" x="172" y="330"/><use href="#d2" x="216" y="330"/><use href="#d2" x="260" y="330"/><use href="#d2" x="302" y="330"/><use href="#d1" x="345" y="328"/><use href="#d1" x="388" y="330"/><use href="#d1" x="432" y="330"/><use href="#d1" x="474" y="326"/>
 <rect x="570" y="78" width="75" height="63" fill="#fff"/><rect x="590" y="72" width="24" height="8" fill="#fff"/><path d="M582 90H604M582 100H604M582 110H604M582 120H604M582 130H604M586 86V136M600 86V136" stroke="#f00" stroke-width="4"/><path d="M620 86H640M620 100H640M620 114H640M620 128H640" stroke="#888" stroke-width="3" stroke-dasharray="6 3"/>
 <rect x="570" y="162" width="75" height="96" fill="#fff"/><rect x="590" y="156" width="24" height="8" fill="#fff"/><path d="M582 172H604M582 186H604M582 200H604M582 214H604M582 228H604M582 242H604M586 170V252M600 170V252" stroke="#f00" stroke-width="3.500"/><path d="M620 172H640M620 190H640M620 208H640M620 226H640M620 244H640" stroke="#888" stroke-width="3" stroke-dasharray="6 3"/>
 <rect x="570" y="273" width="75" height="42" fill="#fff"/><rect x="590" y="267" width="24" height="8" fill="#fff"/><path d="M572 283H588V308H572ZM572 293H588M572 301H588M594 285H640M594 295H640M594 305H640" stroke="#333" stroke-width="3"/>
</g>
<!-- UCS -->
<path d="M465.500 886V853M460 863L465.500 853L471 863M465 882.500H495M486 877L496 882.500L486 888" stroke="#f0f" stroke-width="1" style="shape-rendering:auto"/>
</svg>

<!-- bottom -->
<div class="a" style="left:245px;top:924px;width:1093px;height:16px;background:#ececec"></div>
<svg style="left:245px;top:924px" width="200" height="18" viewBox="245 924 200 18" fill="none">
<path d="M356 924L350 939.500H398L407 924" fill="#e4e4e4" stroke="#aaa"/>
<path d="M310 924L319 939.500H347L357 924Z" fill="#f6f6f6" stroke="#aaa"/>
<text x="319" y="936" style="font:13.500px 'Liberation Sans','Noto Sans CJK SC',sans-serif;fill:#222;stroke:#222;stroke-width:.35">模型</text>
<text x="362" y="936" style="font:13px 'Liberation Sans','Noto Sans CJK SC',sans-serif;fill:#555">布局1</text>
<path d="M249 930V937M256 930L251 933.500L256 937ZM271 930L265 933.500L271 937ZM282 930L288 933.500L282 937ZM295 930L300 933.500L295 937ZM302.500 930V937" fill="#777" stroke="#777"/>
</svg>
<div class="a" style="left:0;top:941px;width:23px;height:9px;background:#f2f2f2"></div>
</body></html>
